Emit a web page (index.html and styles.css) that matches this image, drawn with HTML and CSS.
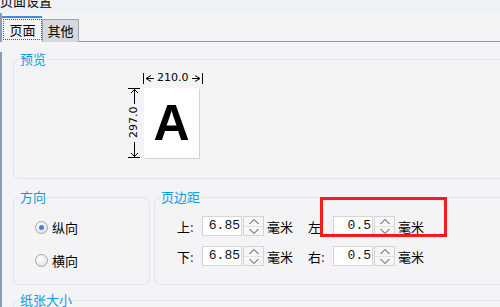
FILE: index.html
```html
<!DOCTYPE html>
<html lang="zh">
<head>
    <meta charset="UTF-8">
    <title>页面设置</title>
    <link rel="stylesheet" href="styles.css">
</head>
<body>
    <div class="titlebar"><div class="title">页面设置</div></div>

    <div class="tabs">
        <div class="tab active"><span class="focus">页面</span></div>
        <div class="tab">其他</div>
    </div>

    <div class="panel">
        <fieldset class="group preview">
            <legend>预览</legend>
            <div class="preview-area">
                <div class="dim-h">
                    <svg width="12" height="11" viewBox="0 0 12 11"><path d="M0.5 0V11M8 2.5L3 5.5L8 8.5M3 5.5H11" stroke="#000" fill="none"/></svg>
                    <span class="dim-text">210.0</span>
                    <svg width="12" height="11" viewBox="0 0 12 11"><path d="M11.5 0V11M4 2.5L9 5.5L4 8.5M9 5.5H1" stroke="#000" fill="none"/></svg>
                </div>
                <div class="page-row">
                    <div class="dim-v">
                        <svg width="14" height="16" viewBox="0 0 14 16"><path d="M2 0.5H14M8.5 1V16M5 5L8.5 1.5L12 5" stroke="#000" fill="none"/></svg>
                        <span class="dim-text vertical">297.0</span>
                        <svg width="14" height="16" viewBox="0 0 14 16"><path d="M2 15.5H14M8.5 0V15M5 11L8.5 14.5L12 11" stroke="#000" fill="none"/></svg>
                    </div>
                    <div class="page">A</div>
                </div>
            </div>
        </fieldset>

        <div class="bottom-row">
            <fieldset class="group orientation">
                <legend>方向</legend>
                <div class="orientation-body">
                    <label class="radio-row"><span class="radio checked"></span>纵向</label>
                    <label class="radio-row"><span class="radio"></span>横向</label>
                </div>
            </fieldset>

            <fieldset class="group margins">
                <legend>页边距</legend>
                <div class="margins-body">
                    <div class="margin-row">
                        <span class="m-label">上<span class="colon">:</span></span>
                        <span class="num-box">6.85</span>
                        <span class="spinner">
                            <span class="spin-up"><svg width="12" height="7" viewBox="0 0 12 7"><path d="M1.5 6L6 1.5L10.5 6" stroke="#444" fill="none"/></svg></span>
                            <span class="spin-down"><svg width="12" height="7" viewBox="0 0 12 7"><path d="M1.5 1L6 5.5L10.5 1" stroke="#444" fill="none"/></svg></span>
                        </span>
                        <span class="unit">毫米</span>
                        <span class="m-label second">左</span>
                        <span class="num-box">0.5</span>
                        <span class="spinner">
                            <span class="spin-up"><svg width="12" height="7" viewBox="0 0 12 7"><path d="M1.5 6L6 1.5L10.5 6" stroke="#444" fill="none"/></svg></span>
                            <span class="spin-down"><svg width="12" height="7" viewBox="0 0 12 7"><path d="M1.5 1L6 5.5L10.5 1" stroke="#444" fill="none"/></svg></span>
                        </span>
                        <span class="unit">毫米</span>
                    </div>
                    <div class="margin-row">
                        <span class="m-label">下<span class="colon">:</span></span>
                        <span class="num-box">6.85</span>
                        <span class="spinner">
                            <span class="spin-up"><svg width="12" height="7" viewBox="0 0 12 7"><path d="M1.5 6L6 1.5L10.5 6" stroke="#444" fill="none"/></svg></span>
                            <span class="spin-down"><svg width="12" height="7" viewBox="0 0 12 7"><path d="M1.5 1L6 5.5L10.5 1" stroke="#444" fill="none"/></svg></span>
                        </span>
                        <span class="unit">毫米</span>
                        <span class="m-label second">右<span class="colon">:</span></span>
                        <span class="num-box">0.5</span>
                        <span class="spinner">
                            <span class="spin-up"><svg width="12" height="7" viewBox="0 0 12 7"><path d="M1.5 6L6 1.5L10.5 6" stroke="#444" fill="none"/></svg></span>
                            <span class="spin-down"><svg width="12" height="7" viewBox="0 0 12 7"><path d="M1.5 1L6 5.5L10.5 1" stroke="#444" fill="none"/></svg></span>
                        </span>
                        <span class="unit">毫米</span>
                    </div>
                </div>
            </fieldset>
        </div>

        <fieldset class="group paper">
            <legend>纸张大小</legend>
        </fieldset>
    </div>

    <div class="highlight"></div>
</body>
</html>
```

FILE: styles.css
```css
* {
    margin: 0;
    padding: 0;
    box-sizing: border-box;
}

body {
    position: relative;
    width: 500px;
    height: 307px;
    overflow: hidden;
    background: #f4f4f6;
    font-family: "Noto Sans CJK SC", "DejaVu Sans", sans-serif;
    font-size: 13px;
    color: #000;
}

.titlebar {
    height: 13px;
    overflow: hidden;
    background: #eef2f7;
}

.title {
    margin-top: -7px;
    line-height: 15px;
    font-size: 13px;
}

.tabs {
    display: flex;
    align-items: flex-end;
    height: 29px;
    padding-left: 2px;
    border-bottom: 1px solid #8e99ab;
    border-left: 2px solid #8d9cb6;
}

.tab {
    width: 37px;
    height: 23px;
    line-height: 20px;
    padding-top: 1px;
    text-align: center;
    background: #d8d9de;
    border: 1px solid #9ba3b1;
    border-bottom: none;
    margin-bottom: -1px;
}

.tab.active {
    width: 40px;
    height: 26px;
    margin-left: -2px;
    padding: 1px 0 1px 1px;
    background: #f4f4f6;
    border: none;
    border-top: 2px solid #3b8de5;
}

.focus {
    display: block;
    height: 21px;
    line-height: 19px;
    border: 1px dotted #555;
}

.panel {
    height: 270px;
    padding-left: 11px;
    border-left: 2px solid #8d9cb6;
}

.group {
    border: 1px solid #e2e3e8;
    border-radius: 6px;
    min-width: 0;
}

.group legend {
    margin-left: 5px;
    padding: 0 1px;
    font-size: 13px;
    line-height: 14px;
    color: #0d9bdb;
}

.preview {
    width: 560px;
    margin-top: 10px;
}

.preview-area {
    padding: 5px 0 20px 112px;
}

.dim-h {
    display: flex;
    align-items: center;
    height: 14px;
    margin-left: 17px;
}

.dim-text {
    font-family: "DejaVu Sans", sans-serif;
    font-size: 11px;
    line-height: 12px;
    padding: 0 2px;
}

.page-row {
    display: flex;
    margin-top: 3px;
}

.dim-v {
    display: flex;
    flex-direction: column;
    align-items: flex-start;
    width: 18px;
    height: 70px;
}

.dim-v .vertical {
    writing-mode: vertical-rl;
    transform: rotate(180deg);
    height: 38px;
    padding: 2px 0 0;
    margin-left: 2px;
    text-align: center;
}

.page {
    width: 55px;
    height: 70px;
    background: #fff;
    box-shadow: 1px 1px 0 #d2d2d6;
    font-family: "Liberation Sans", sans-serif;
    font-weight: bold;
    font-size: 50px;
    line-height: 70px;
    text-align: center;
}

.bottom-row {
    display: flex;
    gap: 4px;
    margin-top: 11px;
}

.orientation {
    width: 137px;
    height: 95px;
    flex-shrink: 0;
}

.orientation-body {
    padding: 13px 0 0 21px;
}

.radio-row {
    display: flex;
    align-items: center;
    gap: 4px;
    height: 20px;
    margin-bottom: 13px;
}

.radio {
    width: 13px;
    height: 13px;
    border: 1px solid #a7a7ab;
    border-radius: 50%;
    background: radial-gradient(circle at 40% 35%, #fff 0%, #ececef 55%, #d4d4d8 100%);
    position: relative;
}

.radio.checked::after {
    content: '';
    position: absolute;
    left: 3px;
    top: 3px;
    width: 5px;
    height: 5px;
    border-radius: 50%;
    background: #3f7fe8;
}

.margins {
    width: 420px;
    height: 95px;
    flex-shrink: 0;
}

.margins-body {
    padding: 12px 0 0 22px;
}

.margin-row {
    display: flex;
    align-items: center;
    height: 20px;
    margin-bottom: 10px;
}

.m-label {
    width: 25px;
}

.m-label.second {
    margin-left: 15px;
}

.colon {
    color: #4a2f63;
}

.num-box {
    width: 40px;
    height: 20px;
    background: #fff;
    border: 1px solid #d4d4d6;
    font-family: "Liberation Mono", monospace;
    font-size: 13px;
    line-height: 18px;
    text-align: right;
    padding-right: 1px;
    color: #111;
}

.spinner {
    display: flex;
    flex-direction: column;
    width: 21px;
    height: 20px;
    margin-left: 1px;
    border: 1px solid #d4d4d6;
    background: #f6f6f8;
}

.spin-up, .spin-down {
    display: flex;
    justify-content: center;
    align-items: center;
    height: 9px;
}

.spin-down {
    border-top: 1px solid #e2e2e6;
}

.unit {
    margin-left: 3px;
}

.paper {
    width: 560px;
    height: 40px;
    margin-top: 8px;
}

.highlight {
    position: absolute;
    left: 320px;
    top: 197px;
    width: 127px;
    height: 40px;
    border: 3px solid #f21c1c;
}
```
